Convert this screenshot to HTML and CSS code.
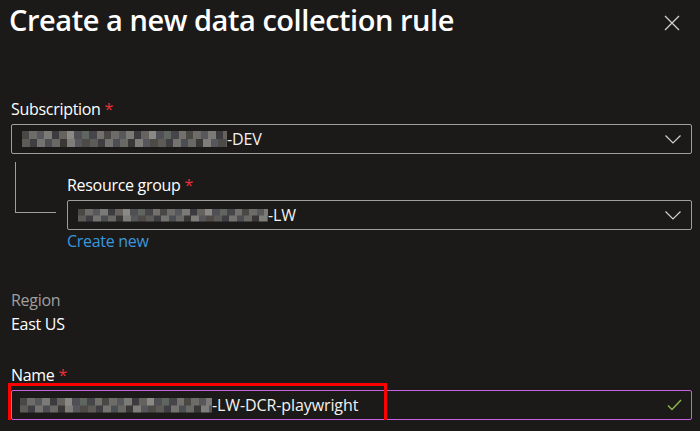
FILE: index.html
```html
<!DOCTYPE html>
<html>
<head>
<meta charset="utf-8">
<link rel="stylesheet" href="styles.css">
</head>
<body>
<div class="header">
  <h1 class="title">Create a new data collection rule</h1>
  <svg class="close" width="16" height="16" viewBox="0 0 16 16"><path d="M1 1 L15 15 M15 1 L1 15" stroke="#d2d0ce" stroke-width="1.3" fill="none"/></svg>
</div>
<div class="form">
  <div class="field sub-field">
    <div class="label">Subscription <span class="req">*</span></div>
    <div class="input">
      <span class="value"><span class="mosaic m-sub"></span>-DEV</span>
      <svg class="chev" width="16" height="9" viewBox="0 0 16 9"><path d="M0.5 0.5 L8 8 L15.5 0.5" stroke="#d2d0ce" stroke-width="1.2" fill="none"/></svg>
    </div>
  </div>
  <div class="tree">
    <div class="connector"></div>
    <div class="field rg-field">
      <div class="label">Resource group <span class="req">*</span></div>
      <div class="input">
        <span class="value"><span class="mosaic m-rg"></span>-LW</span>
        <svg class="chev" width="16" height="9" viewBox="0 0 16 9"><path d="M0.5 0.5 L8 8 L15.5 0.5" stroke="#d2d0ce" stroke-width="1.2" fill="none"/></svg>
      </div>
      <div class="link">Create new</div>
    </div>
  </div>
  <div class="region">
    <div class="label muted">Region</div>
    <div class="static">East US</div>
  </div>
  <div class="field name-field">
    <div class="label">Name <span class="req">*</span></div>
    <div class="input focused">
      <span class="value"><span class="mosaic m-name"></span>-LW-DCR-playwright</span>
      <svg class="check" width="15" height="12" viewBox="0 0 15 12"><path d="M1 6.5 L5 10.5 L14 1" stroke="#8cb54a" stroke-width="1.5" fill="none"/></svg>
      <div class="highlight"></div>
    </div>
  </div>
</div>
</body>
</html>
```
FILE: styles.css
```css
html, body {
  margin: 0;
  padding: 0;
  background: #1b1a19;
  color: #ffffff;
  font-family: "Open Sans", "Noto Sans", sans-serif;
  font-size: 16px;
  overflow: hidden;
}
.header {
  display: flex;
  justify-content: space-between;
  align-items: flex-start;
  height: 40px;
}
.title {
  margin: 0;
  padding-left: 9px;
  font-size: 29px;
  font-weight: 600;
  line-height: 40px;
  color: #ffffff;
  letter-spacing: -0.45px;
}
.close {
  margin-top: 15px;
  margin-right: 20px;
}
.form {
  margin-left: 11px;
  width: 681px;
  padding-top: 58px;
}
.label {
  line-height: 22px;
  height: 22px;
  letter-spacing: -0.3px;
}
.req {
  color: #e8303a;
}
.muted {
  color: #a19f9d;
}
.input {
  position: relative;
  margin-top: 4px;
  height: 30px;
  box-sizing: border-box;
  border: 1px solid #a19f9d;
  border-radius: 2px;
  display: flex;
  align-items: center;
  justify-content: space-between;
  padding: 0 10px 0 10px;
}
.input.focused {
  border-color: #c862e0;
  padding-left: 8px;
}
.value {
  display: flex;
  align-items: center;
  color: #f3f2f1;
  letter-spacing: -0.1px;
  line-height: 22px;
}
.mosaic {
  display: inline-block;
  height: 16px;
  background:
    repeating-linear-gradient(to right, #4a4845 0 7px, #6e6c69 7px 15px, #57585c 15px 22px, #7b7a76 22px 30px, #3c3b40 30px 37px, #66625e 37px 45px, #8a8985 45px 52px, #504f55 52px 60px, #5f6660 60px 67px, #45454a 67px 75px, #74706b 75px 82px) top left / 100% 50% no-repeat,
    repeating-linear-gradient(to right, #5d5b58 0 8px, #3f3e42 8px 15px, #75736f 15px 23px, #4b4e52 23px 30px, #6a6864 30px 38px, #3a3836 38px 45px, #7f7d7a 45px 53px, #55575c 53px 60px, #4e4a47 60px 68px) bottom left / 100% 50% no-repeat;
}
.m-sub { width: 205px; }
.m-rg { width: 190px; height: 13px; }
.m-name { width: 192px; height: 15px; }
.chev { margin-right: 0; }
.check { margin-right: -1px; margin-top: -1px; }
.tree {
  display: flex;
  align-items: flex-start;
}
.connector {
  margin-left: 4px;
  margin-top: 8px;
  width: 40px;
  height: 50px;
  border-left: 1px solid #a19f9d;
  border-bottom: 1px solid #a19f9d;
  flex: none;
}
.rg-field {
  flex: 1;
  margin-left: 11px;
  margin-top: 20px;
}
.link {
  color: #3a96dd;
  line-height: 22px;
  letter-spacing: -0.3px;
}
.region {
  margin-top: 37px;
}
.static {
  margin-top: 2px;
  line-height: 22px;
  letter-spacing: -0.3px;
}
.name-field {
  margin-top: 29px;
}
.highlight {
  position: absolute;
  left: -4px;
  top: -8px;
  width: 379px;
  height: 43px;
  border: 3px solid #ff0000;
  box-sizing: border-box;
}
```
